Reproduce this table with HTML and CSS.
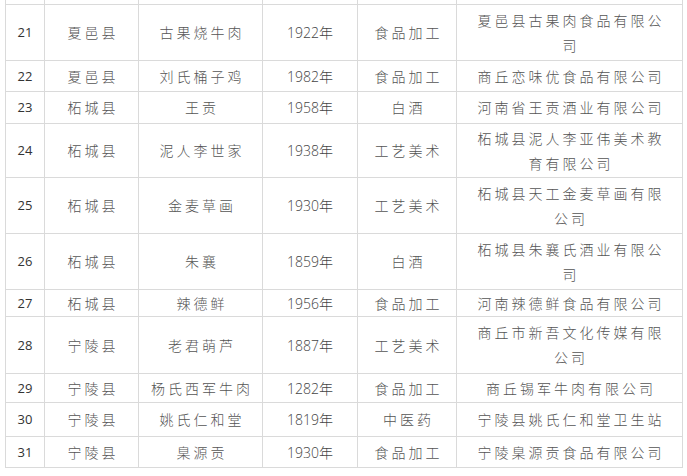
FILE: index.html
```html
<!DOCTYPE html>
<html lang="zh-CN">
<head>
<meta charset="utf-8">
<title>老字号名录</title>
<link rel="stylesheet" href="styles.css">
</head>
<body>
<div class="sheet">
  <div class="cell sliver"></div><div class="cell sliver"></div><div class="cell sliver"></div><div class="cell sliver"></div><div class="cell sliver"></div><div class="cell sliver"></div>

  <div class="cell num">21</div><div class="cell">夏邑县</div><div class="cell">古果烧牛肉</div><div class="cell year">1922年</div><div class="cell">食品加工</div><div class="cell co">夏邑县古果肉食品有限公司</div>
  <div class="cell num">22</div><div class="cell">夏邑县</div><div class="cell">刘氏桶子鸡</div><div class="cell year">1982年</div><div class="cell">食品加工</div><div class="cell co">商丘恋味优食品有限公司</div>
  <div class="cell num">23</div><div class="cell">柘城县</div><div class="cell">王贡</div><div class="cell year">1958年</div><div class="cell">白酒</div><div class="cell co">河南省王贡酒业有限公司</div>
  <div class="cell num">24</div><div class="cell">柘城县</div><div class="cell">泥人李世家</div><div class="cell year">1938年</div><div class="cell">工艺美术</div><div class="cell co">柘城县泥人李亚伟美术教育有限公司</div>
  <div class="cell num">25</div><div class="cell">柘城县</div><div class="cell">金麦草画</div><div class="cell year">1930年</div><div class="cell">工艺美术</div><div class="cell co">柘城县天工金麦草画有限公司</div>
  <div class="cell num">26</div><div class="cell">柘城县</div><div class="cell">朱襄</div><div class="cell year">1859年</div><div class="cell">白酒</div><div class="cell co">柘城县朱襄氏酒业有限公司</div>
  <div class="cell num">27</div><div class="cell">柘城县</div><div class="cell">辣德鲜</div><div class="cell year">1956年</div><div class="cell">食品加工</div><div class="cell co">河南辣德鲜食品有限公司</div>
  <div class="cell num">28</div><div class="cell">宁陵县</div><div class="cell">老君萌芦</div><div class="cell year">1887年</div><div class="cell">工艺美术</div><div class="cell co">商丘市新吾文化传媒有限公司</div>
  <div class="cell num">29</div><div class="cell">宁陵县</div><div class="cell">杨氏西军牛肉</div><div class="cell year">1282年</div><div class="cell">食品加工</div><div class="cell co">商丘锡军牛肉有限公司</div>
  <div class="cell num">30</div><div class="cell">宁陵县</div><div class="cell">姚氏仁和堂</div><div class="cell year">1819年</div><div class="cell">中医药</div><div class="cell co">宁陵县姚氏仁和堂卫生站</div>
  <div class="cell num">31</div><div class="cell">宁陵县</div><div class="cell">臬源贡</div><div class="cell year">1930年</div><div class="cell">食品加工</div><div class="cell co">宁陵臬源贡食品有限公司</div>
</div>
</body>
</html>
```

FILE: styles.css
```css
html, body {
  margin: 0;
  padding: 0;
  background: #ffffff;
}

.sheet {
  display: grid;
  grid-template-columns: 39px 94px 124px 95px 99px 226px;
  grid-template-rows: 5px 56px 31px 32px 54px 56px 56px 27px 57px 29px 34px 31px;
  width: max-content;
  margin-left: 5px;
  border-left: 1px solid #dadada;
  font-family: "Noto Sans CJK SC", "Noto Sans", sans-serif;
  font-weight: 300;
  font-size: 14px;
  color: #555555;
}

.cell {
  box-sizing: border-box;
  border-right: 1px solid #dadada;
  border-bottom: 1px solid #dadada;
  display: flex;
  align-items: center;
  justify-content: center;
  text-align: center;
  letter-spacing: 3px;
  line-height: 25px;
  padding: 0 0 0 3px;
}

.num {
  font-family: "Open Sans", "Noto Sans", sans-serif;
  font-weight: 400;
  font-size: 13px;
  letter-spacing: 0;
  padding: 0;
  color: #333333;
}

.year {
  font-family: "Open Sans", "Noto Sans CJK SC", sans-serif;
  font-size: 14px;
  letter-spacing: 0;
  padding: 0;
  color: #444444;
}

.co {
  padding: 0 16px 0 19px;
}
```
